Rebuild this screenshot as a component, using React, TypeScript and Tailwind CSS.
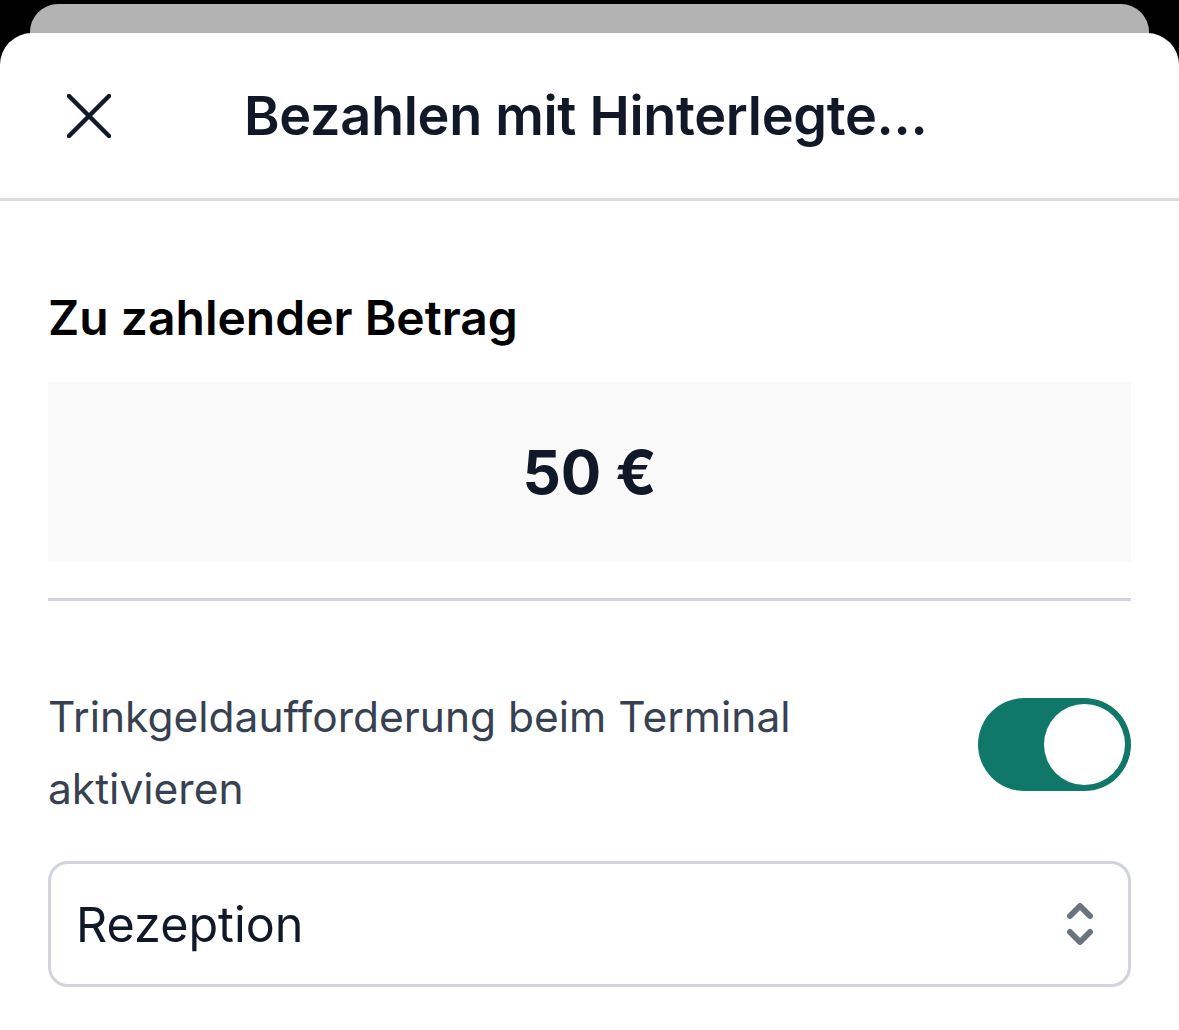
export default function App() {
  return (
    <div className="relative h-[1030px] w-[1179px] overflow-hidden bg-black" style={{ fontFamily: "Inter, 'Noto Sans', sans-serif" }}>
      {/* sheet behind */}
      <div className="ml-[30px] mr-[30px] mt-[4px] h-[80px] rounded-t-[28px] bg-[#b3b3b3]" />
      <div className="absolute inset-x-0 top-[33px] bottom-0 rounded-t-[32px] bg-white">
        <div className="flex h-[168px] items-center border-b-[3px] border-[#dcdcdc] pl-[67px]">
          <svg width="44" height="44" viewBox="0 0 44 44" fill="none" stroke="#111827" strokeWidth="4.5" strokeLinecap="round">
            <path d="M2 2 L42 42" />
            <path d="M42 2 L2 42" />
          </svg>
          <h1 className="ml-[133px] text-[54px] font-semibold tracking-[-0.3px] text-[#111827]">Bezahlen mit Hinterlegte...</h1>
        </div>

        <div className="px-[48px]">
          <h2 className="mt-[87px] text-[48px] font-semibold leading-[60px] text-black">Zu zahlender Betrag</h2>
          <div className="mt-[34px] flex h-[179px] items-center justify-center bg-[#f9f9f9]">
            <span className="text-[60px] font-bold text-[#111827]">50 €</span>
          </div>
          <div className="mt-[37px] h-[3px] bg-[#d1d5db]" />

          <div className="mt-[80px] flex items-start justify-between">
            <p className="w-[800px] text-[42.5px] leading-[72px] text-[#374151]">
              Trinkgeldaufforderung beim Terminal aktivieren
            </p>
            <button className="mt-[17px] flex h-[93px] w-[153px] items-center justify-end rounded-full bg-[#107869] pr-[6px]">
              <span className="h-[81px] w-[81px] rounded-full bg-white" />
            </button>
          </div>

          <div className="mt-[36px] flex h-[126px] items-center justify-between rounded-[20px] border-[3px] border-[#d1d5db] pl-[25px] pr-[34px]">
            <span className="mt-[3px] text-[48.5px] text-[#111827]">Rezeption</span>
            <svg width="28" height="46" viewBox="0 0 28 46" fill="none" stroke="#6b7280" strokeWidth="6" strokeLinecap="round" strokeLinejoin="round">
              <path d="M4 15 L14 5 L24 15" />
              <path d="M4 31 L14 41 L24 31" />
            </svg>
          </div>
        </div>
      </div>
    </div>
  )
}
